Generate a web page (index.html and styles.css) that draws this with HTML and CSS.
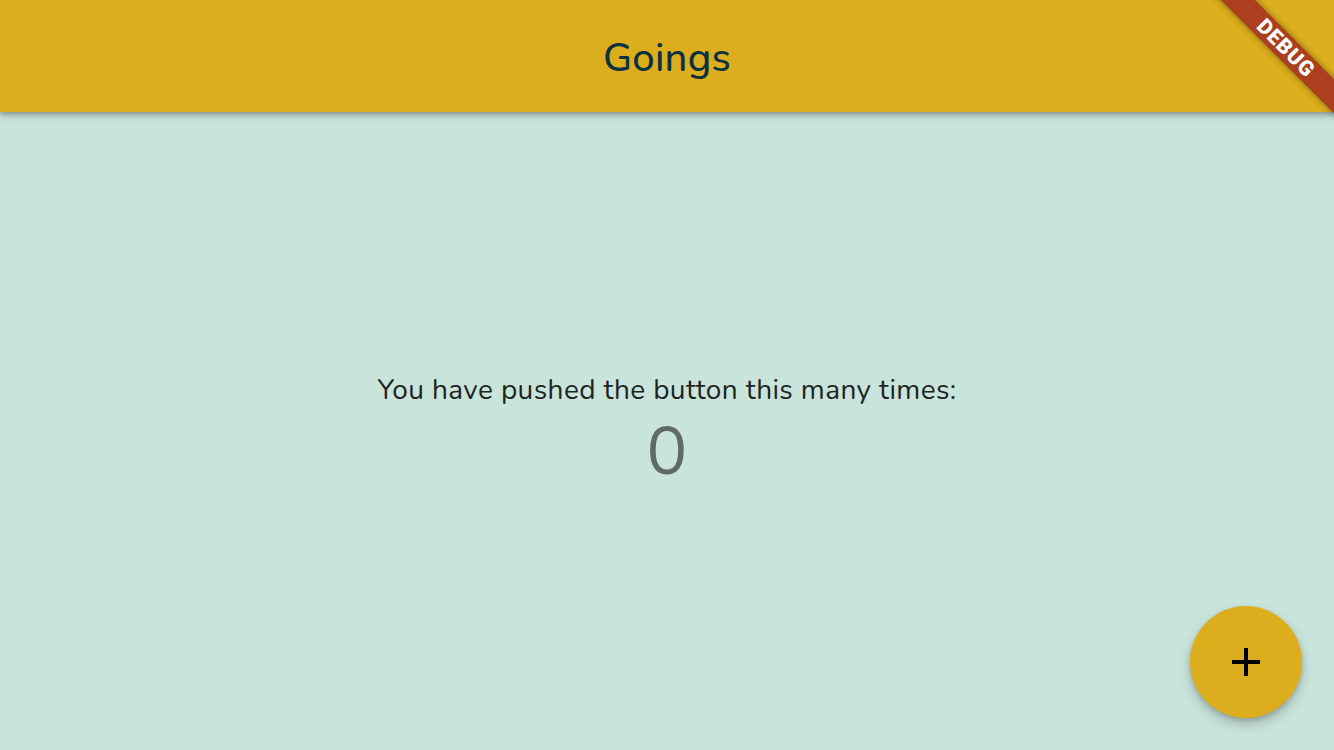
FILE: index.html
```html
<!DOCTYPE html>
<html>
<head>
<meta charset="utf-8">
<link rel="stylesheet" href="styles.css">
</head>
<body>
<div class="app">
  <header class="appbar">
    <h1 class="title">Goings</h1>
  </header>
  <main class="content">
    <p class="label">You have pushed the button this many times:</p>
    <p class="count">0</p>
  </main>
  <button class="fab" aria-label="Increment">
    <svg viewBox="0 0 24 24" width="48" height="48"><path d="M19 13h-6v6h-2v-6H5v-2h6V5h2v6h6v2z" fill="#000"/></svg>
  </button>
  <div class="banner-anchor">
    <div class="banner">DEBUG</div>
  </div>
</div>
</body>
</html>
```

FILE: styles.css
```css
html, body {
  margin: 0;
  padding: 0;
  width: 1334px;
  height: 750px;
  overflow: hidden;
}
body {
  font-family: "Nunito", "Lato", "Noto Sans", sans-serif;
  background: #c9e4db;
}
.app {
  position: relative;
  width: 1334px;
  height: 750px;
  display: flex;
  flex-direction: column;
  overflow: hidden;
}
.appbar {
  height: 112px;
  flex: 0 0 112px;
  box-sizing: border-box;
  padding-top: 4px;
  background: #dcae1d;
  display: flex;
  align-items: center;
  justify-content: center;
  box-shadow: 0 4px 6px rgba(0,0,0,0.22), 0 2px 3px rgba(0,0,0,0.12);
  position: relative;
  z-index: 1;
}
.title {
  margin: 0;
  font-size: 40px;
  font-weight: 500;
  color: #0b3142;
  letter-spacing: 0.2px;
}
.content {
  flex: 1;
  display: flex;
  flex-direction: column;
  align-items: center;
  justify-content: center;
}
.label {
  margin: 0 0 4px 0;
  font-size: 28px;
  color: #1e2422;
  letter-spacing: 0.4px;
  line-height: 38px;
}
.count {
  margin: 0;
  font-size: 68px;
  color: #5e6b66;
  line-height: 78px;
}
.fab {
  position: absolute;
  right: 32px;
  bottom: 32px;
  width: 112px;
  height: 112px;
  border-radius: 50%;
  border: none;
  background: #dcae1d;
  display: flex;
  align-items: center;
  justify-content: center;
  padding: 0;
  box-shadow: 0 6px 12px rgba(0,0,0,0.22), 0 2px 4px rgba(0,0,0,0.12);
}
.banner-anchor {
  position: absolute;
  top: 0;
  right: 0;
  width: 0;
  height: 0;
  z-index: 5;
}
.banner {
  position: absolute;
  left: -160px;
  top: 56px;
  width: 320px;
  height: 24px;
  transform-origin: 160px -56px;
  transform: rotate(45deg);
  background: #ab3f1e;
  color: #fff;
  font-family: "Roboto", "Noto Sans", sans-serif;
  font-weight: 900;
  font-size: 21px;
  letter-spacing: 1px;
  line-height: 24px;
  text-align: center;
  box-shadow: 0 0 6px rgba(0,0,0,0.45);
}
```
